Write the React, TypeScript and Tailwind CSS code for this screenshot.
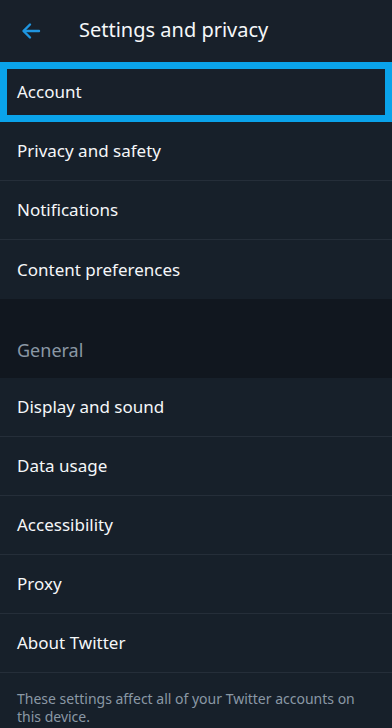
import React from "react";

const font = { fontFamily: '"Noto Sans", "DejaVu Sans", sans-serif' };

function Row({ label, last }: { label: string; last?: boolean }) {
  return (
    <div className={`h-[59px] flex items-center pl-[17px] text-[17px] text-[#f5f7f9] ${last ? "" : "border-b border-[#252e39]"}`}>
      {label}
    </div>
  );
}

export default function App() {
  return (
    <div className="w-[392px] h-[728px] bg-[#17202a] overflow-hidden" style={font}>
      <div className="h-[62px] flex items-center bg-[#18202a]">
        <svg className="ml-[21px] w-[20px] h-[20px]" viewBox="0 0 20 20" fill="none" stroke="#1f95e0" strokeWidth="2.4" strokeLinecap="round" strokeLinejoin="round">
          <path d="M18 10H3" />
          <path d="M9 3.5 2.5 10 9 16.5" />
        </svg>
        <div className="ml-[38px] text-[20px] text-[#f5f7f9] pb-[2px]">Settings and privacy</div>
      </div>
      <div className="h-[60px] border-[7px] border-[#0aa3ea] bg-[#18202a] flex items-center pl-[10px] text-[17px] text-[#f5f7f9]">
        Account
      </div>
      <Row label="Privacy and safety" />
      <Row label="Notifications" />
      <Row label="Content preferences" last />
      <div className="h-[79px] bg-[#11171f] flex items-end pl-[17px] pb-[14px] text-[18px] text-[#8a98a5]">General</div>
      <Row label="Display and sound" />
      <Row label="Data usage" />
      <Row label="Accessibility" />
      <Row label="Proxy" />
      <Row label="About Twitter" />
      <div className="pl-[17px] pr-[10px] pt-[17px] text-[14px] leading-[18px] text-[#8a98a5]">
        These settings affect all of your Twitter accounts on this device.
      </div>
    </div>
  );
}
